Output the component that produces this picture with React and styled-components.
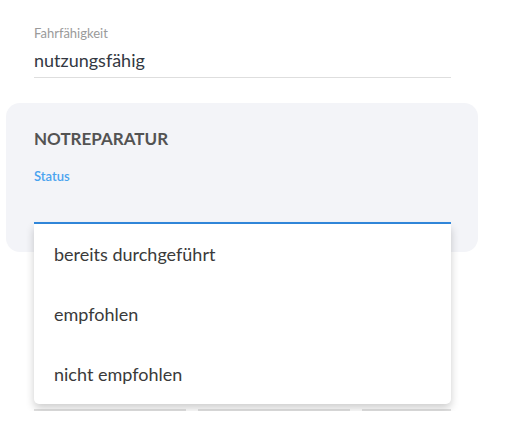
import React from "react";
import styled, { createGlobalStyle } from "styled-components";

const Global = createGlobalStyle`
  html, body { margin: 0; padding: 0; background: #ffffff; }
  body { font-family: "Lato", "Noto Sans", sans-serif; -webkit-font-smoothing: antialiased; }
  * { box-sizing: border-box; }
`;

const Page = styled.div`
  width: 472px;
  margin-left: 6px;
  padding-top: 25px;
`;

const FieldBlock = styled.div`
  margin: 0 27px 0 28px;
`;

const FieldLabel = styled.div`
  font-size: 13px;
  line-height: 16px;
  color: #9a9a9a;
`;

const FieldValue = styled.div`
  font-size: 18px;
  line-height: 24px;
  color: #333842;
  padding: 7px 0 5px;
  border-bottom: 1px solid #dedede;
`;

const Panel = styled.section`
  margin-top: 25px;
  background: #f3f4f8;
  border-radius: 14px;
  padding: 24px 27px 28px 28px;
`;

const PanelTitle = styled.h2`
  margin: 0;
  font-size: 17px;
  line-height: 24px;
  font-weight: 700;
  color: #535353;
`;

const StatusLabel = styled.div`
  margin-top: 17px;
  font-size: 13px;
  line-height: 16px;
  font-weight: 600;
  color: #4aa3ef;
`;

const Select = styled.div`
  position: relative;
  height: 40px;
  border-bottom: 2px solid #3189de;
`;

const Menu = styled.ul`
  position: absolute;
  top: calc(100% + 2px);
  left: 0;
  right: 0;
  margin: 0;
  padding: 0;
  list-style: none;
  background: #ffffff;
  border-radius: 0 0 5px 5px;
  box-shadow: 0 4px 8px rgba(0, 0, 0, 0.2);
  z-index: 10;
`;

const MenuItem = styled.li`
  height: 60px;
  display: flex;
  align-items: center;
  padding-left: 20px;
  font-size: 18px;
  color: #3a3a3a;
`;

const Row = styled.div`
  margin: 37px 27px 0 28px;
  display: grid;
  grid-template-columns: 152px 152px 1fr;
  column-gap: 12px;
`;

const RowField = styled.div`
  height: 122px;
  border-bottom: 2px solid #e2e2e2;
`;

const options = ["bereits durchgeführt", "empfohlen", "nicht empfohlen"];

export default function App() {
  return (
    <>
      <Global />
      <Page>
        <FieldBlock>
          <FieldLabel>Fahrfähigkeit</FieldLabel>
          <FieldValue>nutzungsfähig</FieldValue>
        </FieldBlock>
        <Panel>
          <PanelTitle>NOTREPARATUR</PanelTitle>
          <StatusLabel>Status</StatusLabel>
          <Select>
            <Menu>
              {options.map((o) => (
                <MenuItem key={o}>{o}</MenuItem>
              ))}
            </Menu>
          </Select>
        </Panel>
        <Row>
          <RowField />
          <RowField />
          <RowField />
        </Row>
      </Page>
    </>
  );
}
